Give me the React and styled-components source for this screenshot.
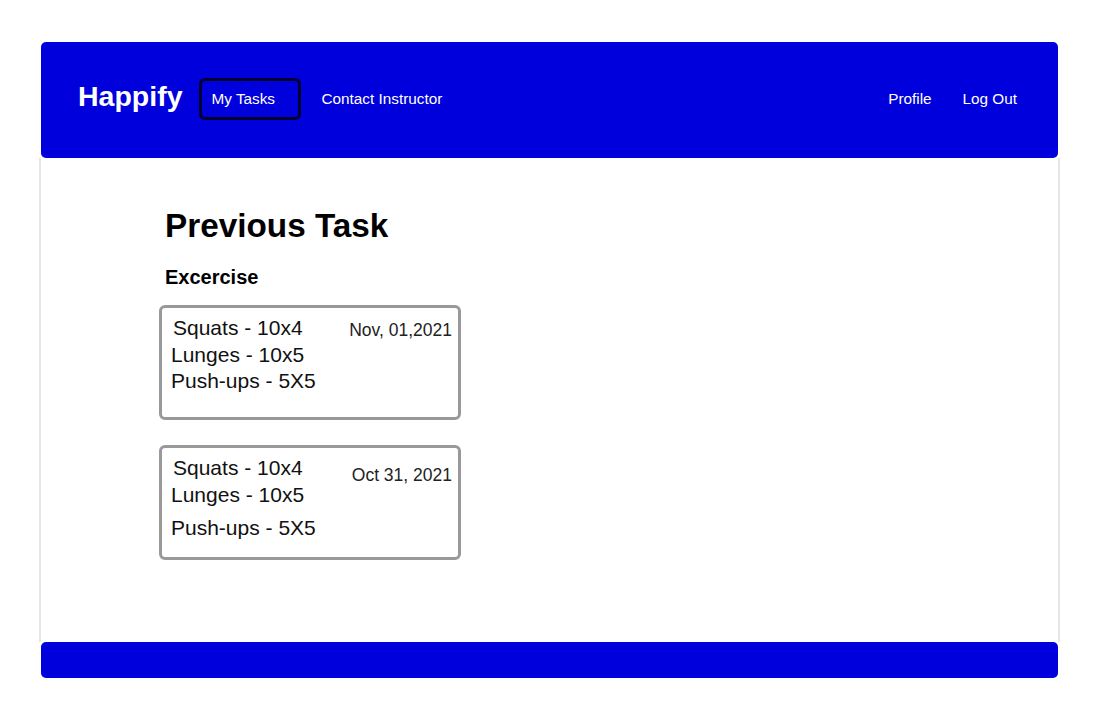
import React from "react";
import styled, { createGlobalStyle } from "styled-components";

const GlobalStyle = createGlobalStyle`
  html, body {
    margin: 0;
    padding: 0;
    background: #ffffff;
    font-family: "Liberation Sans", Arial, sans-serif;
  }
  * {
    box-sizing: border-box;
  }
`;

const Page = styled("div")`
  padding: 42px 0 0 39px;
`;

const Shell = styled("div")`
  width: 1021px;
  display: flex;
  flex-direction: column;
`;

const Header = styled("header")`
  display: flex;
  align-items: center;
  height: 116px;
  margin: 0 2px;
  padding: 0 41px 2px 37px;
  background-color: #0000dc;
  border-radius: 5px;
  color: #ffffff;
`;

const Brand = styled("div")`
  font-size: 28.5px;
  font-weight: bold;
  margin-right: 16px;
  padding-bottom: 6px;
`;

const NavLink = styled("a")`
  display: flex;
  align-items: center;
  font-size: 15.3px;
  color: #ffffff;
  text-decoration: none;
  margin-left: ${(p) => p.gap || 0}px;
`;

const ActiveLink = styled(NavLink)`
  width: 102px;
  height: 42px;
  padding-left: 10px;
  border: 3px solid #00002e;
  border-radius: 6px;
`;

const Spacer = styled("div")`
  margin-left: auto;
`;

const Main = styled("main")`
  border-left: 2px solid #e6e6e6;
  border-right: 2px solid #e6e6e6;
  padding: 49px 0 82px 124px;
`;

const Title = styled("h1")`
  margin: 0;
  font-size: 33.3px;
  font-weight: bold;
  color: #000000;
  line-height: normal;
`;

const Subtitle = styled("h2")`
  margin: 21px 0 16px;
  font-size: 20px;
  font-weight: bold;
  color: #000000;
  line-height: normal;
`;

const CardList = styled("div")`
  display: flex;
  flex-direction: column;
  gap: 25px;
  margin-left: -6px;
`;

const Card = styled("div")`
  display: flex;
  justify-content: space-between;
  width: 302px;
  height: 115px;
  padding: 7px 6px 0 9px;
  border: 3px solid #999999;
  border-radius: 6px;
`;

const Lines = styled("div")`
  display: flex;
  flex-direction: column;
`;

const Line = styled("div")`
  font-size: 21px;
  line-height: 26.5px;
  color: #111111;
  margin-left: ${(p) => p.indent || 0}px;
  margin-top: ${(p) => p.extra || 0}px;
`;

const DateText = styled("div")`
  font-size: 17.5px;
  color: #222222;
  margin-top: ${(p) => p.offset}px;
`;

const Footer = styled("footer")`
  height: 36px;
  margin: 0 2px;
  background-color: #0000dc;
  border-radius: 5px;
`;

const tasks = [
  { date: "Nov, 01,2021", dateOffset: 5, pushGap: 0 },
  { date: "Oct 31, 2021", dateOffset: 10, pushGap: 6.5 },
];

export default function App() {
  return (
    <Page>
      <GlobalStyle />
      <Shell>
        <Header>
          <Brand>Happify</Brand>
          <ActiveLink href="#">My Tasks</ActiveLink>
          <NavLink href="#" gap={21}>Contact Instructor</NavLink>
          <Spacer />
          <NavLink href="#">Profile</NavLink>
          <NavLink href="#" gap={31}>Log Out</NavLink>
        </Header>
        <Main>
          <Title>Previous Task</Title>
          <Subtitle>Excercise</Subtitle>
          <CardList>
            {tasks.map((t) => (
              <Card key={t.date}>
                <Lines>
                  <Line indent={2}>Squats - 10x4</Line>
                  <Line>Lunges - 10x5</Line>
                  <Line extra={t.pushGap}>Push-ups - 5X5</Line>
                </Lines>
                <DateText offset={t.dateOffset}>{t.date}</DateText>
              </Card>
            ))}
          </CardList>
        </Main>
        <Footer />
      </Shell>
    </Page>
  );
}
